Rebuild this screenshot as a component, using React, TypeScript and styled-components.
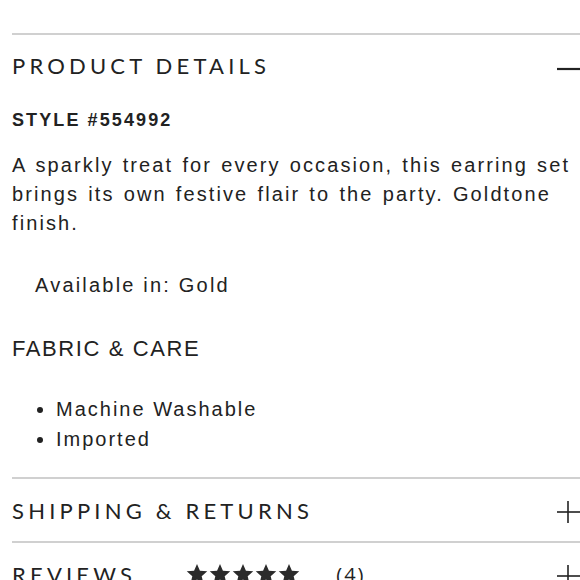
import React from 'react';
import styled, { createGlobalStyle } from 'styled-components';

const GlobalStyle = createGlobalStyle`
  html, body {
    margin: 0;
    padding: 0;
    background: #ffffff;
    overflow: hidden;
  }
`;

const Page = styled.div`
  width: 580px;
  height: 580px;
  box-sizing: border-box;
  padding: 33px 0 0 12px;
  overflow: hidden;
  color: #222222;
`;

const Section = styled.section`
  border-top: 2px solid #d0d0d0;
`;

const Header = styled.div<{ $height: number }>`
  display: flex;
  align-items: center;
  justify-content: space-between;
  height: ${(p) => p.$height}px;
`;

const Title = styled.h2`
  margin: 0;
  font-family: Lato, 'Open Sans', sans-serif;
  font-weight: 400;
  font-size: 22px;
  letter-spacing: 4.2px;
  color: #222222;
  display: flex;
  align-items: center;
`;

const Toggle = styled.svg<{ $shift?: number }>`
  width: 24px;
  height: 24px;
  flex: none;
  overflow: visible;
  transform: translateY(${(p) => p.$shift ?? 0}px);
`;

const Body = styled.div`
  font-family: 'Liberation Sans', Arial, sans-serif;
  font-size: 20px;
  padding-bottom: 23px;
`;

const StyleCode = styled.div`
  margin-top: 13px;
  font-weight: 700;
  font-size: 18px;
  line-height: 24px;
  letter-spacing: 2.1px;
`;

const Description = styled.p`
  margin: 19px 0 0;
  line-height: 29px;
  letter-spacing: 2.1px;
  word-spacing: 1.5px;
`;

const Available = styled.div`
  margin-top: 33px;
  padding-left: 23px;
  line-height: 29px;
  letter-spacing: 2.2px;
`;

const SubTitle = styled.h3`
  margin: 34px 0 0;
  font-weight: 400;
  font-size: 22px;
  line-height: 30px;
  letter-spacing: 1.6px;
`;

const List = styled.ul`
  margin: 30px 0 0;
  padding: 0 0 0 44px;
  line-height: 30px;
  letter-spacing: 2px;
`;

const Stars = styled.span`
  margin-left: 50px;
  display: inline-flex;
  gap: 1px;
`;

const Count = styled.span`
  margin-left: 36px;
  font-family: 'Open Sans', sans-serif;
  font-size: 20px;
  letter-spacing: 2px;
`;

function Minus() {
  return (
    <Toggle viewBox="0 0 24 24" $shift={4}>
      <line x1="1" y1="12" x2="26" y2="12" stroke="#222" strokeWidth="2.2" />
    </Toggle>
  );
}

function Plus() {
  return (
    <Toggle viewBox="0 0 24 24" $shift={2}>
      <line x1="1" y1="12" x2="24" y2="12" stroke="#222" strokeWidth="1.6" />
      <line x1="12" y1="1" x2="12" y2="23" stroke="#222" strokeWidth="1.6" />
    </Toggle>
  );
}

function StarIcon() {
  return (
    <svg width="22" height="22" viewBox="0 0 24 24">
      <path
        d="M12 1l3.2 7.4 8 .7-6.1 5.3 1.9 7.9L12 18.1l-7 4.2 1.9-7.9L.8 9.1l8-.7z"
        fill="#2b2b2b"
      />
    </svg>
  );
}

export default function App() {
  return (
    <Page>
      <GlobalStyle />
      <Section>
        <Header $height={60}>
          <Title>PRODUCT DETAILS</Title>
          <Minus />
        </Header>
        <Body>
          <StyleCode>STYLE #554992</StyleCode>
          <Description>
            A sparkly treat for every occasion, this earring set brings its own
            festive flair to the party. Goldtone finish.
          </Description>
          <Available>Available in: Gold</Available>
          <SubTitle>FABRIC &amp; CARE</SubTitle>
          <List>
            <li>Machine Washable</li>
            <li>Imported</li>
          </List>
        </Body>
      </Section>
      <Section>
        <Header $height={62}>
          <Title>SHIPPING &amp; RETURNS</Title>
          <Plus />
        </Header>
      </Section>
      <Section>
        <Header $height={62}>
          <Title>
            REVIEWS
            <Stars>
              {[0, 1, 2, 3, 4].map((i) => (
                <StarIcon key={i} />
              ))}
            </Stars>
            <Count>(4)</Count>
          </Title>
          <Plus />
        </Header>
      </Section>
    </Page>
  );
}
